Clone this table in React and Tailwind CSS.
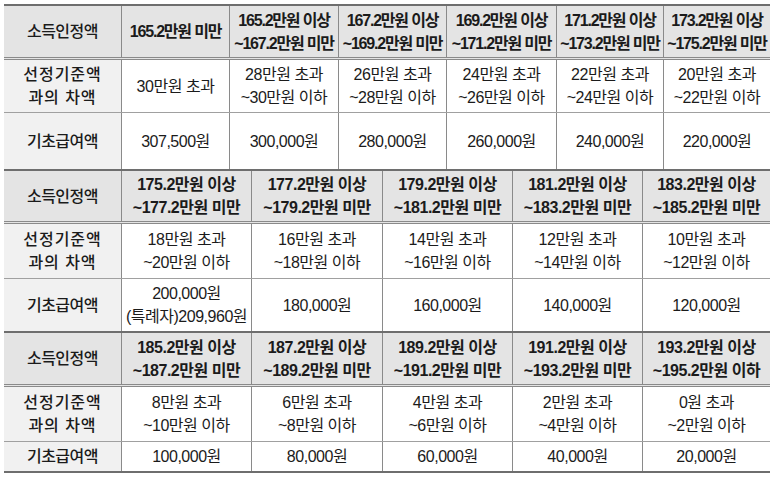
import React from 'react'

const font = { fontFamily: '"Liberation Sans", "Noto Sans CJK KR", sans-serif' }

const sections = [
  {
    cols: ['w-[117px]', 'w-[108px]', 'w-[109px]', 'w-[108px]', 'w-[110px]', 'w-[107px]', 'w-[107px]'],
    heights: ['h-[51px]', 'h-[52px]', 'h-[56px]'],
    headTrack: 'tracking-[-0.075em]',
    head: [
      ['165.2만원 미만'],
      ['165.2만원 이상', '~167.2만원 미만'],
      ['167.2만원 이상', '~169.2만원 미만'],
      ['169.2만원 이상', '~171.2만원 미만'],
      ['171.2만원 이상', '~173.2만원 미만'],
      ['173.2만원 이상', '~175.2만원 미만'],
    ],
    diff: [
      ['30만원 초과'],
      ['28만원 초과', '~30만원 이하'],
      ['26만원 초과', '~28만원 이하'],
      ['24만원 초과', '~26만원 이하'],
      ['22만원 초과', '~24만원 이하'],
      ['20만원 초과', '~22만원 이하'],
    ],
    pay: [['307,500원'], ['300,000원'], ['280,000원'], ['260,000원'], ['240,000원'], ['220,000원']],
  },
  {
    cols: ['w-[117px]', 'w-[130px]', 'w-[131px]', 'w-[130px]', 'w-[130px]', 'w-[128px]'],
    heights: ['h-[50px]', 'h-[54px]', 'h-[52px]'],
    headTrack: 'tracking-[-0.03em]',
    head: [
      ['175.2만원 이상', '~177.2만원 미만'],
      ['177.2만원 이상', '~179.2만원 미만'],
      ['179.2만원 이상', '~181.2만원 미만'],
      ['181.2만원 이상', '~183.2만원 미만'],
      ['183.2만원 이상', '~185.2만원 미만'],
    ],
    diff: [
      ['18만원 초과', '~20만원 이하'],
      ['16만원 초과', '~18만원 이하'],
      ['14만원 초과', '~16만원 이하'],
      ['12만원 초과', '~14만원 이하'],
      ['10만원 초과', '~12만원 이하'],
    ],
    pay: [['200,000원', '(특례자)209,960원'], ['180,000원'], ['160,000원'], ['140,000원'], ['120,000원']],
  },
  {
    cols: ['w-[117px]', 'w-[130px]', 'w-[131px]', 'w-[130px]', 'w-[130px]', 'w-[128px]'],
    heights: ['h-[51px]', 'h-[54px]', 'h-[29px]'],
    headTrack: 'tracking-[-0.03em]',
    head: [
      ['185.2만원 이상', '~187.2만원 미만'],
      ['187.2만원 이상', '~189.2만원 미만'],
      ['189.2만원 이상', '~191.2만원 미만'],
      ['191.2만원 이상', '~193.2만원 미만'],
      ['193.2만원 이상', '~195.2만원 이하'],
    ],
    diff: [
      ['8만원 초과', '~10만원 이하'],
      ['6만원 초과', '~8만원 이하'],
      ['4만원 초과', '~6만원 이하'],
      ['2만원 초과', '~4만원 이하'],
      ['0원 초과', '~2만원 이하'],
    ],
    pay: [['100,000원'], ['80,000원'], ['60,000원'], ['40,000원'], ['20,000원']],
  },
]

function Cell({ lines, className }) {
  return (
    <div className={`flex flex-col items-center justify-center text-center whitespace-nowrap leading-[23px] ${className}`}>
      {lines.map((l, i) => (
        <span key={i}>{l}</span>
      ))}
    </div>
  )
}

function Section({ s, last }) {
  return (
    <div className={`border-t-2 border-[#6e6e6e] ${last ? 'border-b-2' : ''}`}>
      {/* header row */}
      <div className={`flex ${s.heights[0]} bg-[#e4e4e4] border-b-[3px] border-double border-[#8a8a8a] box-content`}>
        <Cell lines={['소득인정액']} className={`${s.cols[0]} font-medium`} />
        {s.head.map((h, i) => (
          <Cell key={i} lines={h} className={`${s.cols[i + 1]} ${s.headTrack} border-l border-[#8a8a8a] font-bold`} />
        ))}
      </div>
      <div className={`flex ${s.heights[1]} border-b border-[#a0a0a0] box-content`}>
        <Cell lines={['선정기준액', '과의 차액']} className={`${s.cols[0]} bg-[#f1f1f1] font-medium tracking-[0.06em]`} />
        {s.diff.map((d, i) => (
          <Cell key={i} lines={d} className={`${s.cols[i + 1]} border-l border-[#8a8a8a]`} />
        ))}
      </div>
      <div className={`flex ${s.heights[2]}`}>
        <Cell lines={['기초급여액']} className={`${s.cols[0]} bg-[#f1f1f1] font-medium`} />
        {s.pay.map((p, i) => (
          <Cell key={i} lines={p} className={`${s.cols[i + 1]} border-l border-[#8a8a8a]`} />
        ))}
      </div>
    </div>
  )
}

export default function App() {
  return (
    <div className="bg-white w-[779px] h-[478px] pt-[4px] pl-[4px]" style={font}>
      <div className="w-[766px] text-[16px] tracking-[-0.03em] text-[#1b1b1b]">
        {sections.map((s, i) => (
          <Section key={i} s={s} last={i === sections.length - 1} />
        ))}
      </div>
    </div>
  )
}
